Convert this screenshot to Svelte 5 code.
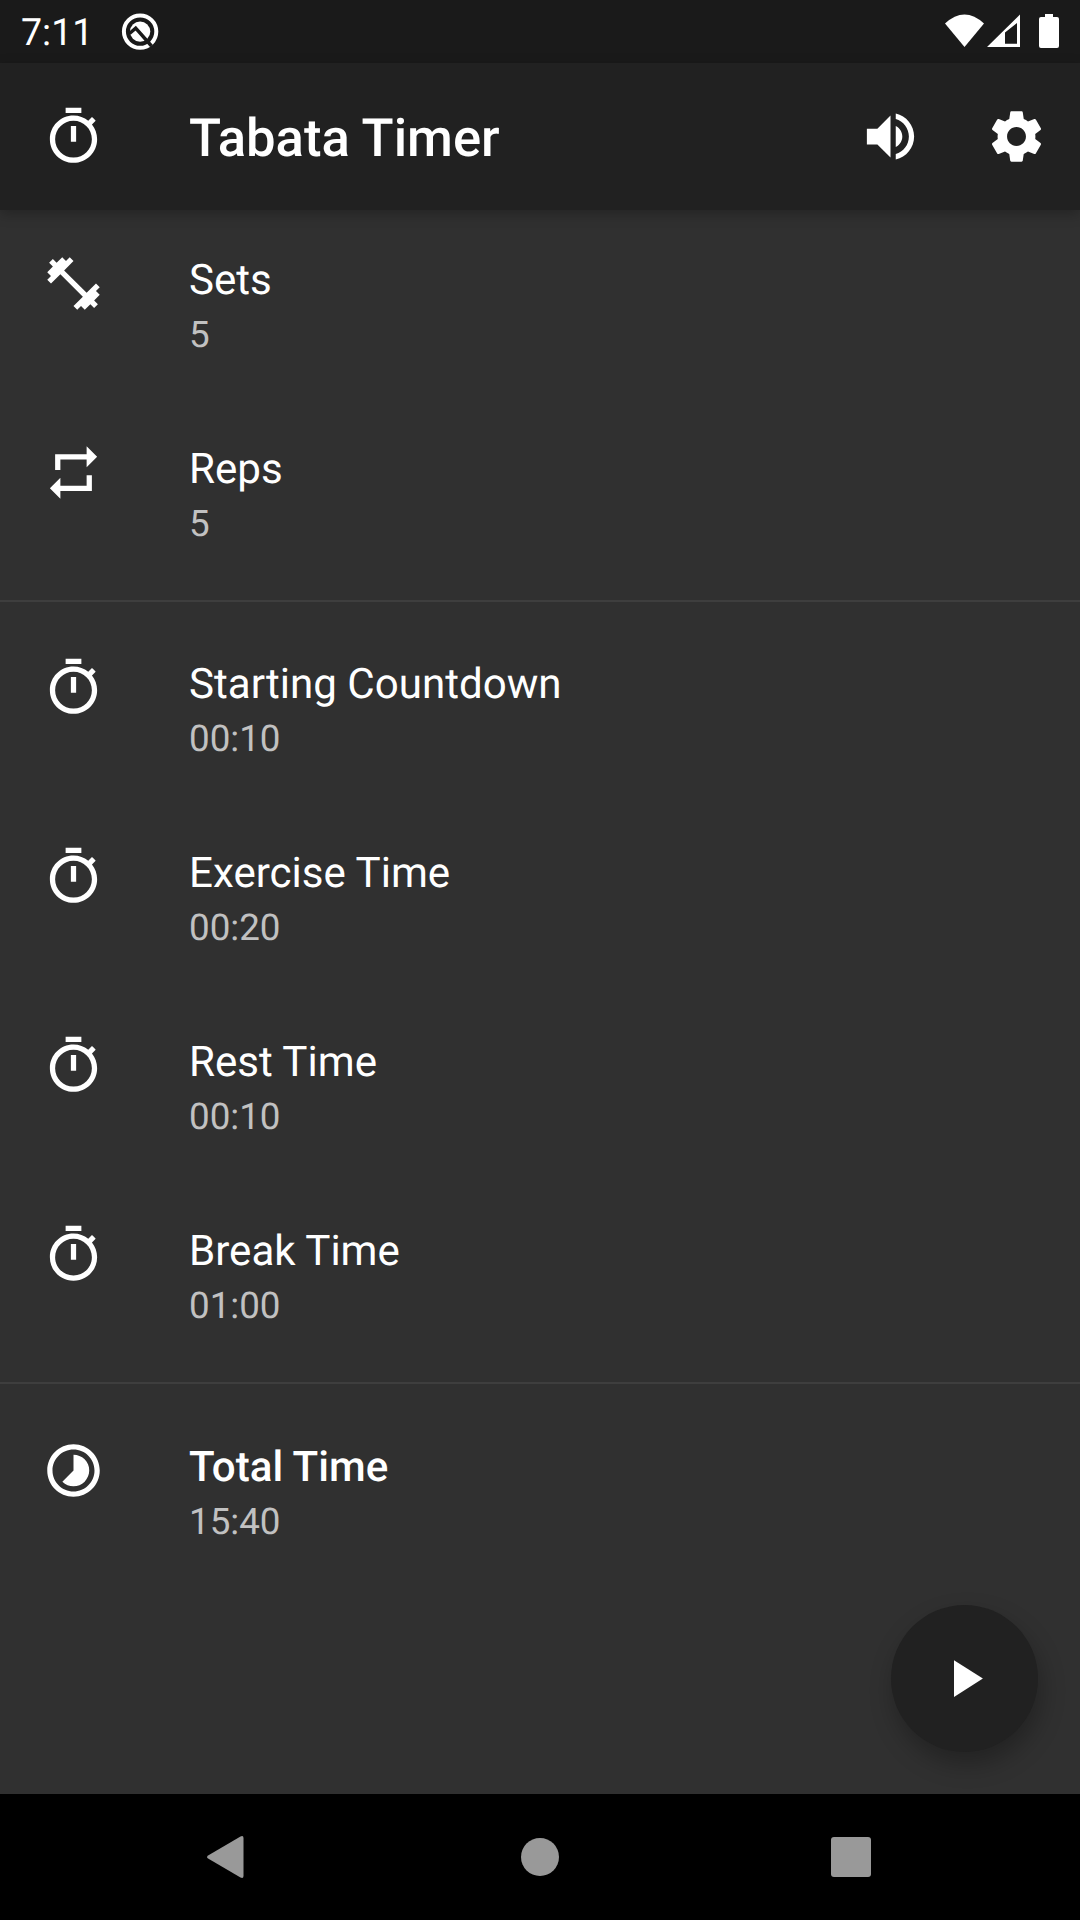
<script>
  const icons = {
    timer:
      'M15 1H9v2h6V1zm-4 13h2V8h-2v6zm8.03-6.61l1.42-1.42c-.43-.51-.9-.99-1.41-1.41l-1.42 1.42C16.07 4.74 14.12 4 12 4c-4.97 0-9 4.03-9 9s4.02 9 9 9 9-4.03 9-9c0-2.12-.74-4.07-1.97-5.61zM12 20c-3.87 0-7-3.13-7-7s3.13-7 7-7 7 3.13 7 7-3.13 7-7 7z',
    barbell:
      'M20.57 14.86L22 13.43 20.57 12 17 15.57 8.43 7 12 3.43 10.57 2 9.14 3.43 7.71 2 5.57 4.14 4.14 2.71 2.71 4.14l1.43 1.43L2 7.71l1.43 1.43L2 10.57 3.43 12 7 8.43 15.57 17 12 20.57 13.43 22l1.43-1.43L16.29 22l2.14-2.14 1.43 1.43 1.43-1.43-1.43-1.43L22 16.29z',
    repeat: 'M7 7h10v3l4-4-4-4v3H5v6h2V7zm10 10H7v-3l-4 4 4 4v-3h12v-6h-2v4z',
    timelapse:
      'M16.24 7.76C15.07 6.59 13.54 6 12 6v6l-4.24 4.24c2.34 2.34 6.14 2.34 8.49 0 2.34-2.34 2.34-6.14-.01-8.48zM12 2C6.48 2 2 6.48 2 12s4.48 10 10 10 10-4.48 10-10S17.52 2 12 2zm0 18c-4.42 0-8-3.58-8-8s3.58-8 8-8 8 3.58 8 8-3.58 8-8 8z',
    volume:
      'M3 9v6h4l5 5V4L7 9H3zm13.5 3c0-1.77-1.02-3.29-2.5-4.03v8.05c1.48-.73 2.5-2.25 2.5-4.02zM14 3.23v2.06c2.89.86 5 3.54 5 6.71s-2.11 5.85-5 6.71v2.06c4.01-.91 7-4.49 7-8.77s-2.99-7.86-7-8.77z',
    settings:
      'M19.14 12.94c.04-.3.06-.61.06-.94 0-.32-.02-.64-.07-.94l2.03-1.58c.18-.14.23-.41.12-.61l-1.92-3.32c-.12-.22-.37-.29-.59-.22l-2.39.96c-.5-.38-1.03-.7-1.62-.94L14.4 2.81c-.04-.24-.24-.41-.48-.41h-3.84c-.24 0-.43.17-.47.41L9.25 5.350C8.66 5.590 8.120 5.920 7.630 6.290L5.240 5.330c-.22-.08-.47 0-.59.22L2.740 8.870C2.620 9.080 2.660 9.340 2.860 9.480l2.030 1.580C4.840 11.360 4.800 11.690 4.800 12s.02.64.07.94l-2.030 1.580c-.18.14-.23.41-.12.61l1.920 3.320c.12.22.37.29.59.22l2.390-.96c.5.38 1.030.7 1.620.94l.36 2.540c.05.24.24.41.48.41h3.840c.24 0 .44-.17.47-.41l.36-2.540c.59-.24 1.130-.56 1.620-.94l2.390.96c.22.08.47 0 .59-.22l1.920-3.320c.12-.22.07-.47-.12-.61L19.140 12.940zM12 15.600c-1.980 0-3.600-1.620-3.600-3.600s1.620-3.600 3.600-3.600 3.600 1.620 3.600 3.600-1.620 3.600-3.600 3.600z',
    play: 'M8 5v14l11-7z'
  };

  const groups = [
    [
      { icon: 'barbell', title: 'Sets', value: '5' },
      { icon: 'repeat', title: 'Reps', value: '5' }
    ],
    [
      { icon: 'timer', title: 'Starting Countdown', value: '00:10' },
      { icon: 'timer', title: 'Exercise Time', value: '00:20' },
      { icon: 'timer', title: 'Rest Time', value: '00:10' },
      { icon: 'timer', title: 'Break Time', value: '01:00' }
    ],
    [{ icon: 'timelapse', title: 'Total Time', value: '15:40', strong: true }]
  ];
</script>

{#snippet glyph(name)}
  <svg class="icon" viewBox="0 0 24 24" aria-hidden="true"><path d={icons[name]} /></svg>
{/snippet}

<div class="screen">
  <div class="status">
    <span class="clock">7:11</span>
    <svg class="badge" viewBox="0 0 38 38" aria-hidden="true">
      <circle cx="19.100" cy="19.600" r="16.200" fill="none" stroke="#fff" stroke-width="4" />
      <circle cx="19.100" cy="19.600" r="10.200" fill="#fff" />
      <path d="M8.500 21.500L14.700 16.200L30.500 34" fill="none" stroke="#1a1a1a" stroke-width="3.400" />
    </svg>
    <svg class="signals" viewBox="0 0 116 36" aria-hidden="true">
      <path d="M0 9.500Q19.500 -8.500 39 9.500L19.500 33z" />
      <path fill-rule="evenodd" d="M42 33L75 .5V33zM60 18.500V29.700H72V9z" />
      <path d="M100 0h8v3h4q2 0 2 2v27q0 2-2 2H96q-2 0-2-2V5q0-2 2-2h4z" />
    </svg>
  </div>

  <header class="appbar">
    {@render glyph('timer')}
    <h1>Tabata Timer</h1>
    <button aria-label="Sound">{@render glyph('volume')}</button>
    <button aria-label="Settings">{@render glyph('settings')}</button>
  </header>

  <main>
    {#each groups as rows}
      <section>
        {#each rows as row}
          <div class="tile">
            {@render glyph(row.icon)}
            <div class="text">
              <span class="title" class:strong={row.strong}>{row.title}</span>
              <span class="value">{row.value}</span>
            </div>
          </div>
        {/each}
      </section>
    {/each}
    <button class="fab" aria-label="Start">{@render glyph('play')}</button>
  </main>

  <nav>
    <svg class="key" viewBox="0 0 40 44" aria-hidden="true">
      <path d="M-.5 20.200L31.500 1.400Q34.500 0 34.500 3V41Q34.500 44 31.500 42.600L-.5 23.800Q-3.500 22 -.5 20.200z" />
    </svg>
    <svg class="key" viewBox="0 0 40 44" aria-hidden="true"><circle cx="20" cy="22" r="19" /></svg>
    <svg class="key" viewBox="0 0 40 44" aria-hidden="true">
      <rect x="0" y="2" width="40" height="40" rx="3" />
    </svg>
  </nav>
</div>

<style>
  :global(body) {
    margin: 0;
    background: #303030;
  }
  .screen {
    width: 1080px;
    height: 1920px;
    display: flex;
    flex-direction: column;
    overflow: hidden;
    background: #303030;
    color: #fff;
    font-family: Roboto, sans-serif;
    text-rendering: geometricPrecision;
  }
  svg {
    display: block;
    flex: none;
  }
  button {
    display: grid;
    place-items: center;
    border: 0;
    padding: 0;
    background: none;
    color: inherit;
  }
  .icon {
    width: 63px;
    height: 63px;
    fill: currentColor;
  }
  .status {
    box-sizing: border-box;
    height: 63px;
    flex: none;
    display: flex;
    align-items: flex-start;
    padding: 0 19px 0 21px;
    background: #1a1a1a;
  }
  .clock {
    width: 100px;
    font-size: 37.500px;
    line-height: 44px;
    padding-top: 11px;
  }
  .badge {
    width: 38px;
    height: 38px;
    margin-top: 12px;
  }
  .signals {
    width: 116px;
    height: 36px;
    margin: 14px 0 0 auto;
    fill: #fff;
  }
  .appbar {
    box-sizing: border-box;
    height: 147px;
    flex: none;
    display: flex;
    align-items: center;
    padding: 0 0.400px 0 42px;
    background: #212121;
    box-shadow: 0 4px 12px rgba(0, 0, 0, 0.25);
    z-index: 1;
  }
  h1 {
    flex: 1;
    margin: 0 0 0 84px;
    padding-top: 2px;
    font-size: 52.600px;
    line-height: 62px;
    font-weight: 500;
  }
  .appbar button {
    width: 126px;
    height: 126px;
  }
  main {
    flex: 1;
    position: relative;
  }
  section + section {
    border-top: 2px solid #3e3e3e;
    margin-top: 12px;
    padding-top: 12.250px;
  }
  .tile {
    box-sizing: border-box;
    height: 189px;
    display: flex;
    align-items: flex-start;
    gap: 84px;
    padding: 42px 42px 0;
  }
  .text {
    display: flex;
    flex-direction: column;
    padding-top: 4px;
  }
  .title {
    font-size: 42.100px;
    line-height: 50px;
  }
  .strong {
    font-weight: 500;
  }
  .value {
    font-size: 36.750px;
    line-height: 44px;
    margin-top: 7px;
    color: #c1c1c1;
  }
  .fab {
    position: absolute;
    right: 42px;
    bottom: 42px;
    width: 147px;
    height: 147px;
    border-radius: 50%;
    background: #212121;
    box-shadow: 3px 12px 24px rgba(0, 0, 0, 0.28);
  }
  nav {
    height: 126px;
    flex: none;
    display: flex;
    align-items: center;
    justify-content: center;
    gap: 271px;
    background: #000;
  }
  .key {
    width: 40px;
    height: 44px;
    fill: #999;
    overflow: visible;
  }
</style>
